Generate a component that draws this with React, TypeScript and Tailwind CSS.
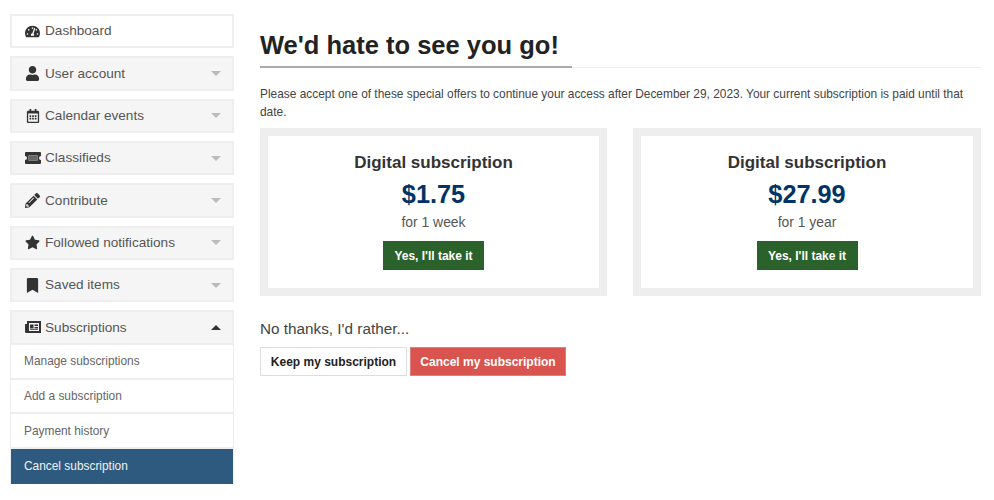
import { FaTachometerAlt, FaUser, FaRegCalendarAlt, FaPencilAlt, FaStar, FaBookmark } from "react-icons/fa";
import type { ReactNode } from "react";

function TicketIcon() {
  return (
    <svg width="16" height="12" viewBox="0 0 16 12" fill="#333333">
      <path fillRule="evenodd" d="M1 0h14a1 1 0 0 1 1 1v3a2 2 0 0 0 0 4v3a1 1 0 0 1-1 1H1a1 1 0 0 1-1-1V8a2 2 0 0 0 0-4V1a1 1 0 0 1 1-1zm2.5 3.5v5h9v-5h-9z" />
      <rect x="3.5" y="3.5" width="9" height="5" fill="#666666" />
    </svg>
  );
}

function NewsIcon() {
  return (
    <svg width="16" height="12" viewBox="0 0 16 12" fill="#333333">
      <path fillRule="evenodd" d="M2 0h14v12H1.5A1.5 1.5 0 0 1 0 10.5V3h2V0zm2 2v8h10V2H4zm1 1.5h3.5v4H5v-4zm4.5 0H13V5H9.5V3.5zm0 2.5H13v1.5H9.5V6zM5 8.2h8v.8H5v-.8z" />
    </svg>
  );
}

function Item({ icon, label, caret, open, white }: { icon: ReactNode; label: string; caret?: boolean; open?: boolean; white?: boolean }) {
  return (
    <div className={`h-[34.33px] flex items-center border-2 border-[#eeeeee] pl-[10px] pr-[10px] ${white ? "bg-white" : "bg-[#f5f5f5]"}`}>
      <span className="w-[21px] flex justify-center text-[15px] text-[#333333]">{icon}</span>
      <span className="ml-[2px] pt-[1px] flex-1 text-[13.6px] text-[#555555]">{label}</span>
      {caret && (
        <span className={`w-0 h-0 mr-[1px] border-x-[5px] border-x-transparent ${open ? "border-b-[5px] border-b-[#333333]" : "border-t-[5px] border-t-[#bbbbbb]"}`} />
      )}
    </div>
  );
}

function Sub({ label, active }: { label: string; active?: boolean }) {
  return (
    <div className={`h-[34.9px] flex items-center pl-[13px] text-[11.9px] border-x border-[#eeeeee] ${active ? "bg-[#2e5a80] text-[#f2f2f2]" : "pt-[2px] bg-white text-[#666666] border-b-2 border-b-[#eeeeee]"}`}>
      {label}
    </div>
  );
}

function Offer({ price, term }: { price: string; term: string }) {
  return (
    <div className="border-8 border-[#eeeeee] bg-white h-[168px] flex flex-col items-center pt-[16px]">
      <div className="text-[17px] leading-[22px] font-bold text-[#333333]">Digital subscription</div>
      <div className="text-[25.3px] leading-[30px] mt-[5px] font-bold text-[#003366]">{price}</div>
      <div className="text-[13.9px] leading-[20px] mt-[3px] text-[#555555]">{term}</div>
      <button className="mt-[9px] h-[29px] w-[101px] bg-[#2b622b] text-white text-[12px] font-bold">Yes, I'll take it</button>
    </div>
  );
}

export default function App() {
  return (
    <div className="w-[994px] h-[500px] bg-white overflow-hidden flex items-start pl-[10px] pr-[13px] pt-[14px]" style={{ fontFamily: '"Liberation Sans", Arial, sans-serif' }}>
      <nav className="w-[224px] shrink-0 flex flex-col gap-[8px]">
        <Item white icon={<FaTachometerAlt />} label="Dashboard" />
        <Item caret icon={<FaUser />} label="User account" />
        <Item caret icon={<span className="text-[14px]"><FaRegCalendarAlt /></span>} label="Calendar events" />
        <Item caret icon={<TicketIcon />} label="Classifieds" />
        <Item caret icon={<FaPencilAlt />} label="Contribute" />
        <Item caret icon={<FaStar />} label="Followed notifications" />
        <Item caret icon={<FaBookmark />} label="Saved items" />
        <div>
          <Item caret open icon={<NewsIcon />} label="Subscriptions" />
          <Sub label="Manage subscriptions" />
          <Sub label="Add a subscription" />
          <Sub label="Payment history" />
          <Sub active label="Cancel subscription" />
        </div>
      </nav>
      <main className="ml-[26px] flex-1">
        <div className="border-b border-[#eeeeee] h-[54px]">
          <h1 className="inline-block h-[54px] pt-[14px] pr-[13px] border-b-2 border-[#aaaaaa] text-[25.5px] leading-[34px] font-bold text-[#222222]">We'd hate to see you go!</h1>
        </div>
        <p className="mt-[17px] text-[11.9px] leading-[18px] text-[#444444]">Please accept one of these special offers to continue your access after December 29, 2023. Your current subscription is paid until that date.</p>
        <div className="mt-[7px] grid grid-cols-[347px_348px] gap-[26px]">
          <Offer price="$1.75" term="for 1 week" />
          <Offer price="$27.99" term="for 1 year" />
        </div>
        <div className="mt-[22px] text-[15.3px] leading-[22px] text-[#444444]">No thanks, I'd rather...</div>
        <div className="mt-[7px] flex gap-[3px]">
          <button className="h-[29px] w-[147px] border border-[#dddddd] bg-white text-[#222222] text-[12px] font-bold">Keep my subscription</button>
          <button className="h-[29px] w-[156px] border border-[#e27b7b] bg-[#d9534f] text-white text-[12px] font-bold">Cancel my subscription</button>
        </div>
      </main>
    </div>
  );
}
